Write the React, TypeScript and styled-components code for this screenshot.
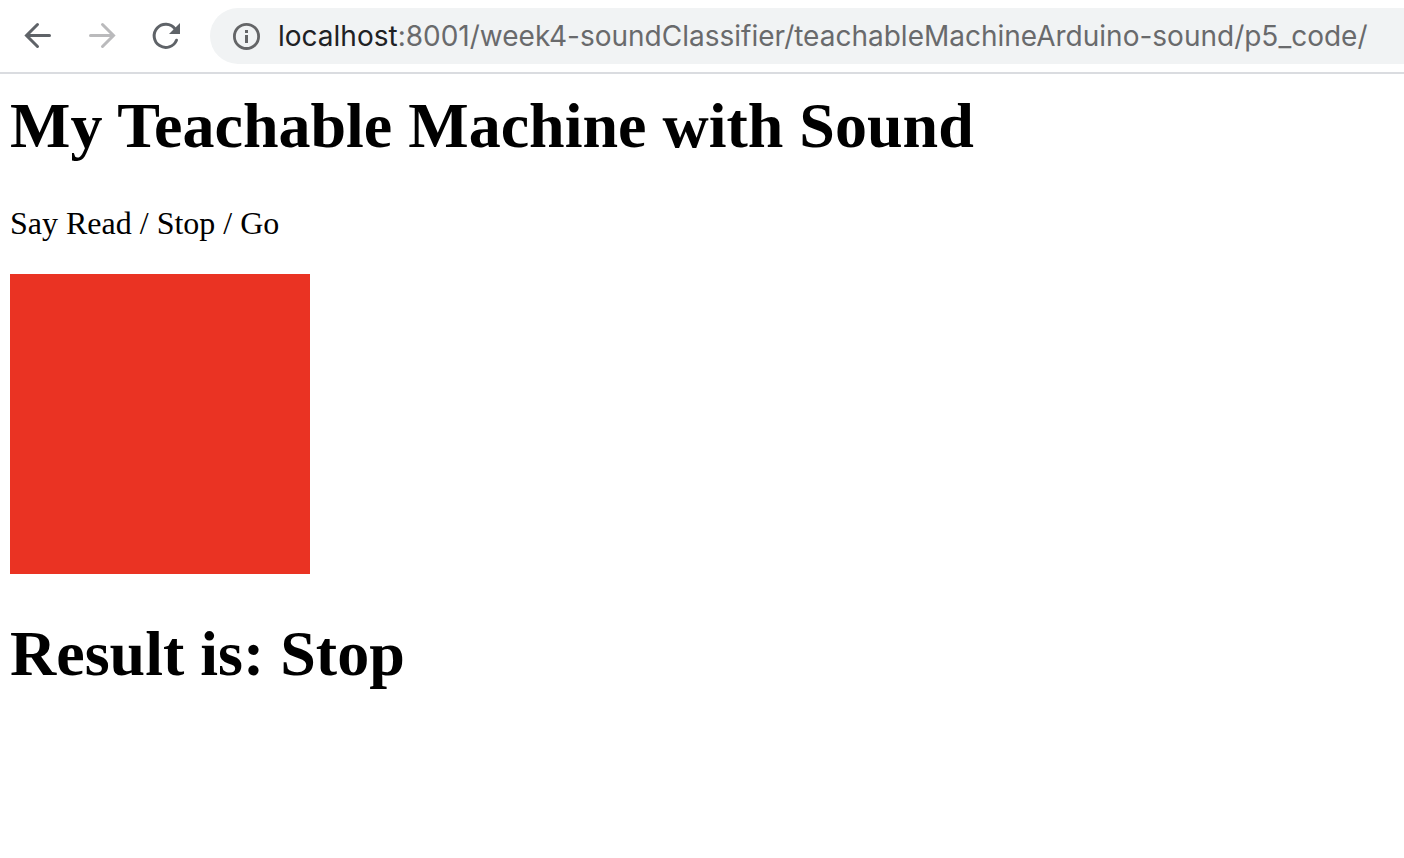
import React from "react";
import styled, { createGlobalStyle } from "styled-components";

const GlobalStyle = createGlobalStyle`
  * { box-sizing: border-box; }
  body {
    margin: 0;
    background: #ffffff;
    color: #000000;
    font-family: "Liberation Serif", "Times New Roman", serif;
  }
`;

const Toolbar = styled.header`
  display: flex;
  align-items: center;
  height: 74px;
  padding-left: 18px;
  border-bottom: 2px solid #dadce0;
  background: #ffffff;
`;

const NavButtons = styled.nav`
  display: flex;
  gap: 24px;
  margin-right: 24px;
`;

const NavButton = styled.button`
  display: flex;
  width: 40px;
  height: 40px;
  padding: 0;
  border: 0;
  background: none;
  color: #5f6368;

  &:disabled {
    color: #bababc;
  }
`;

const AddressBar = styled.div`
  display: flex;
  flex: 1;
  align-items: center;
  gap: 12px;
  min-width: 0;
  height: 56px;
  padding-left: 16px;
  border-radius: 28px 0 0 28px;
  background: #f1f3f4;
`;

const SiteInfoButton = styled(NavButton)`
  flex: none;
  color: #646567;
`;

const Address = styled.div`
  flex: 1;
  min-width: 0;
  overflow: hidden;
  color: #696a6c;
  font-family: Inter, "Liberation Sans", sans-serif;
  font-size: 28px;
  line-height: 36px;
  white-space: nowrap;
  outline: none;
`;

const Host = styled.span`
  color: #202124;
`;

const Page = styled.main`
  padding: 15px 10px;
`;

const Heading = styled.h1`
  margin: 0;
  font-size: 64px;
  line-height: 74px;
  font-weight: 700;
`;

const Instructions = styled.p`
  margin: 42px 0 32px;
  font-size: 32px;
  line-height: 37px;
`;

const Swatch = styled.div`
  width: 300px;
  height: 300px;
  margin-bottom: 43px;
  background: #ea3323;
`;

const BackIcon = () => (
  <svg width="40" height="40" viewBox="0 0 40 40" fill="none" stroke="currentColor" strokeWidth="3" strokeLinecap="round" aria-hidden="true">
    <path d="M31.5 19.5H9M19.5 8.5L8.5 19.5L19.5 30.5" />
  </svg>
);

const ForwardIcon = () => (
  <svg width="40" height="40" viewBox="0 0 40 40" fill="none" stroke="currentColor" strokeWidth="3" strokeLinecap="round" aria-hidden="true">
    <path d="M8.5 19.5H31M20.5 8.5L31.5 19.5L20.5 30.5" />
  </svg>
);

const ReloadIcon = () => (
  <svg width="40" height="40" viewBox="0 0 40 40" aria-hidden="true">
    <path d="M30.5 24.2A11.6 11.6 0 1 1 29 12.8" fill="none" stroke="currentColor" strokeWidth="3" strokeLinecap="round" />
    <path d="M34 7V18H23Z" fill="currentColor" />
  </svg>
);

const InfoIcon = () => (
  <svg width="40" height="40" viewBox="0 0 40 40" aria-hidden="true">
    <circle cx="20.5" cy="20.4" r="12.1" fill="none" stroke="currentColor" strokeWidth="2.8" />
    <path d="M19 14H22V17H19ZM19 19H22V27H19Z" fill="currentColor" />
  </svg>
);

export default function App() {
  return (
    <>
      <GlobalStyle />
      <Toolbar>
        <NavButtons aria-label="Browser navigation">
          <NavButton type="button" aria-label="Back"><BackIcon /></NavButton>
          <NavButton type="button" aria-label="Forward" disabled><ForwardIcon /></NavButton>
          <NavButton type="button" aria-label="Reload"><ReloadIcon /></NavButton>
        </NavButtons>
        <AddressBar>
          <SiteInfoButton type="button" aria-label="Site information"><InfoIcon /></SiteInfoButton>
          <Address role="textbox" aria-label="Address" contentEditable suppressContentEditableWarning spellCheck={false}>
            <Host>localhost</Host>:8001/week4-soundClassifier/teachableMachineArduino-sound/p5_code/
          </Address>
        </AddressBar>
      </Toolbar>
      <Page>
        <Heading>My Teachable Machine with Sound</Heading>
        <Instructions>Say Read / Stop / Go</Instructions>
        <Swatch />
        <Heading as="h2">Result is: Stop</Heading>
      </Page>
    </>
  );
}
